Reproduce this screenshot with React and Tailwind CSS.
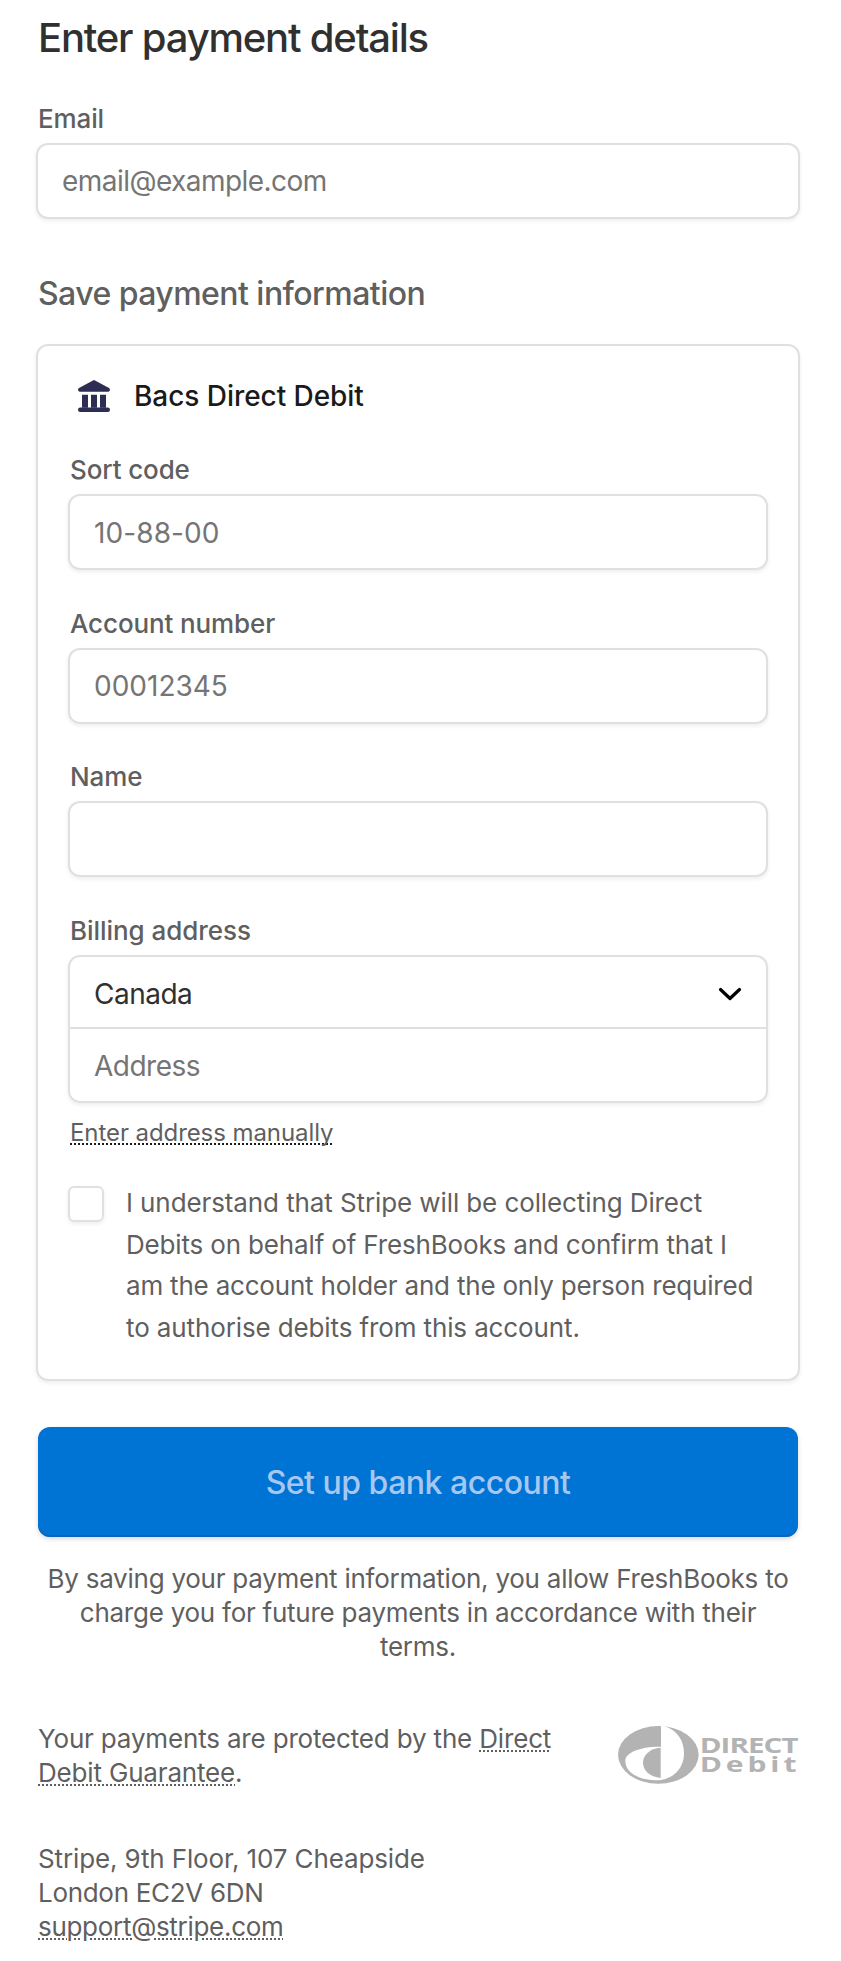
import React, { useState } from 'react';
import clsx from 'clsx';

const inputClass =
    'block w-full h-[76px] rounded-xl border-2 border-[#e0e0e0] bg-white px-6 text-[28px] text-[#303030] placeholder:text-[#757575] placeholder:opacity-100 shadow-[0_2px_4px_rgba(0,0,0,0.07)] outline-none';

const linkClass = 'underline decoration-dotted decoration-2 underline-offset-2';

const Field = ({ label, placeholder, className, inputClassName }) => (
    <label className={clsx('block', className)}>
        <span className="block h-[38px] pl-0.5 text-[26px] leading-[27px] font-medium tracking-[-0.12px] text-[#5f5f5f]">{label}</span>
        <input className={clsx(inputClass, inputClassName)} placeholder={placeholder} />
    </label>
);

const BankIcon = () => (
    <svg width="32" height="32" viewBox="0 0 32 32" fill="#2c2c54">
        <path d="M15 .4a2 2 0 0 1 2 0l14 7.600c1.600 1 1 3.700-.8 3.700H1.800C0 11.700-.6 9 1 8z" />
        <path d="M4 14.700h6v13H4zM13 14.700h6v13h-6zM22 14.700h6v13h-6z" />
        <rect x="0" y="27.500" width="32" height="4.500" rx="2.200" />
    </svg>
);

const DirectDebitLogo = () => (
    <svg width="181" height="58" viewBox="54 48 543 174" className="mt-1 mr-px shrink-0">
        <ellipse cx="175" cy="134.500" rx="121" ry="86.500" fill="#b3b3b3" />
        <path
            d="M183 46H187C230 58 252 90 252 130C252 175 220 212 165 211C110 208 76 185 76 152C76 128 120 109 183 110Z"
            fill="#fff"
        />
        <path d="M182 113C150 115 129 135 129 158C129 182 150 200 182 204Z" fill="#b3b3b3" />
        <g fill="#b3b3b3" fontFamily="Open Sans, sans-serif" fontWeight="700">
            <text x="299" y="129" fontSize="64" letterSpacing="-2" textLength="294" lengthAdjust="spacingAndGlyphs">DIRECT</text>
            <text x="299" y="187" fontSize="62" letterSpacing="8" textLength="302" lengthAdjust="spacingAndGlyphs">Debit</text>
        </g>
    </svg>
);

const App = () => {
    const [agreed, setAgreed] = useState(false);

    return (
        <div className="h-[1961px] overflow-hidden bg-white px-9 pt-3 font-[Inter,sans-serif] text-[#5f5f5f]">
            <div className="w-[764px]">
                <h1 className="h-[93px] pl-0.5 text-[40px] leading-[52px] font-medium tracking-[-1.2px] text-[#303030]">Enter payment details</h1>
                <Field label="Email" placeholder="email@example.com" inputClassName="tracking-[-0.55px]" />

                <h2 className="mt-[55px] h-[70px] pl-0.5 text-[32px] leading-10 font-medium tracking-[-0.55px]">Save payment information</h2>

                {/* Bank account card */}
                <section className="h-[1037px] rounded-xl border-2 border-[#e0e0e0] px-[30px] pt-[34px] shadow-[0_2px_4px_rgba(0,0,0,0.07)]">
                    <div className="flex h-[76px] items-start pl-2.5">
                        <BankIcon />
                        <span className="ml-6 text-[28px] leading-8 font-medium tracking-[-0.05px] text-[#1a1a1a]">Bacs Direct Debit</span>
                    </div>

                    <Field label="Sort code" placeholder="10-88-00" inputClassName="pt-0.5 tracking-[0.1px]" />
                    <Field label="Account number" placeholder="00012345" className="mt-10" />
                    <Field label="Name" placeholder="" className="mt-[39px]" />

                    <div className="mt-10 h-[38px] pl-0.5 text-[26px] leading-[27px] font-medium tracking-[-0.05px]">Billing address</div>
                    <div className="h-[148px] rounded-xl border-2 border-[#e0e0e0] text-[28px] tracking-[-0.5px] shadow-[0_2px_4px_rgba(0,0,0,0.07)]">
                        <div className="flex h-[72px] items-center justify-between border-b-2 border-[#e0e0e0] px-6 pt-1 text-[#303030]">
                            Canada
                            <svg width="24" height="14" viewBox="0 0 24 14" fill="none" stroke="#000" strokeWidth="3.200" strokeLinecap="round" strokeLinejoin="round">
                                <path d="M2.500 2.500L12 11.500L21.500 2.500" />
                            </svg>
                        </div>
                        <input className="h-[72px] w-full px-6 pt-0.5 outline-none placeholder:text-[#757575] placeholder:opacity-100" placeholder="Address" />
                    </div>

                    <div className="mt-[15px] h-[68px] pl-0.5 text-[24px] leading-[30px] tracking-[-0.08px]">
                        <a className={clsx(linkClass, 'decoration-[#1a1a1a] [text-decoration-skip-ink:none]')}>Enter address manually</a>
                    </div>

                    <label className="flex items-start">
                        <input type="checkbox" checked={agreed} onChange={() => setAgreed(!agreed)} className="size-9 shrink-0 appearance-none rounded-md border-2 border-[#e0e0e0] shadow-[0_2px_4px_rgba(0,0,0,0.07)]" />
                        <span className="-mt-1 ml-[22px] text-[26px] leading-[41.6px] tracking-[-0.16px] whitespace-nowrap">
                            <span className="tracking-[-0.1px]">I understand that Stripe will be collecting Direct</span>
                            <br />
                            Debits on behalf of FreshBooks and confirm that I
                            <br />
                            <span className="tracking-[-0.2px]">am the account holder and the only person required</span>
                            <br />
                            <span className="tracking-[-0.12px]">to authorise debits from this account.</span>
                        </span>
                    </label>
                </section>

                <button className="mt-[46px] ml-[2px] block h-[110px] w-[760px] rounded-xl bg-[#0074d4] pt-0.5 text-[32px] font-medium tracking-[-0.5px] text-[#a6c8f0] shadow-[inset_0_-2px_0_rgba(20,90,180,0.6),0_2px_5px_rgba(0,0,0,0.15)]">
                    Set up bank account
                </button>

                <p className="mt-[25px] text-center text-[26px] leading-[34px] tracking-[-0.25px] whitespace-nowrap">
                    By saving your payment information, you allow FreshBooks to
                    <br />
                    charge you for future payments in accordance with their
                    <br />
                    terms.
                </p>

                {/* Footer */}
                <div className="mt-[58px] flex items-start justify-between pl-0.5 text-[26px] leading-[34px] tracking-[-0.17px]">
                    <p className="whitespace-nowrap">
                        Your payments are protected by the <a className={linkClass}>Direct</a>
                        <br />
                        <a className={linkClass}>Debit Guarantee</a>.
                    </p>
                    <DirectDebitLogo />
                </div>

                <div className="mt-[52px] pl-0.5 text-[26px] leading-[34px] tracking-[-0.3px]">
                    <p className="tracking-[-0.13px]">Stripe, 9th Floor, 107 Cheapside</p>
                    <p>London EC2V 6DN</p>
                    <a className={linkClass}>support@stripe.com</a>
                </div>
            </div>
        </div>
    );
};

export default App;
